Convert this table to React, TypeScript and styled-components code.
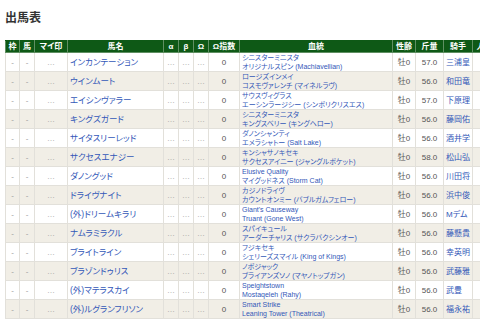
import React from 'react'
import styled, { createGlobalStyle } from 'styled-components'

const GlobalStyle = createGlobalStyle`
  html, body {
    margin: 0;
    padding: 0;
    background: #ffffff;
  }
  body {
    font-family: 'Liberation Sans', 'Noto Sans CJK JP', sans-serif;
    font-feature-settings: 'palt';
    color: #444;
  }
`

type TEntry = {
  name: string
  sire: string
  dam: string
  weight: string
  jockey: string
}

const entries: TEntry[] = [
  { name: 'インカンテーション', sire: 'シニスターミニスタ', dam: 'オリジナルスピン (Machiavellian)', weight: '57.0', jockey: '三浦皇' },
  { name: 'ウインムート', sire: 'ロージズインメイ', dam: 'コスモヴァレンチ (マイネルラヴ)', weight: '56.0', jockey: '和田竜' },
  { name: 'エイシンヴァラー', sire: 'サウスヴィグラス', dam: 'エーシンラージシー (シンボリクリスエス)', weight: '57.0', jockey: '下原理' },
  { name: 'キングズガード', sire: 'シニスターミニスタ', dam: 'キングスベリー (キングヘロー)', weight: '56.0', jockey: '藤岡佑' },
  { name: 'サイタスリーレッド', sire: 'ダノンシャンティ', dam: 'エメラシャトー (Salt Lake)', weight: '56.0', jockey: '酒井学' },
  { name: 'サクセスエナジー', sire: 'キンシャサノキセキ', dam: 'サクセスアイニー (ジャングルポケット)', weight: '58.0', jockey: '松山弘' },
  { name: 'ダノングッド', sire: 'Elusive Quality', dam: 'マイグッドネス (Storm Cat)', weight: '56.0', jockey: '川田将' },
  { name: 'ドライヴナイト', sire: 'カジノドライヴ', dam: 'カウントオンミー (バブルガムフェロー)', weight: '56.0', jockey: '浜中俊' },
  { name: '(外)ドリームキラリ', sire: "Giant's Causeway", dam: 'Truant (Gone West)', weight: '56.0', jockey: 'Mデム' },
  { name: 'ナムラミラクル', sire: 'スパイキュール', dam: 'アーダーチャリス (サクラバクシンオー)', weight: '56.0', jockey: '藤懸貴' },
  { name: 'ブライトライン', sire: 'フジキセキ', dam: 'シェリーズスマイル (King of Kings)', weight: '56.0', jockey: '幸英明' },
  { name: 'ブラゾンドゥリス', sire: 'ノボジャック', dam: 'ブライアンズソノ (マヤノトップガン)', weight: '56.0', jockey: '武藤雅' },
  { name: '(外)マテラスカイ', sire: 'Speightstown', dam: 'Mostaqeleh (Rahy)', weight: '56.0', jockey: '武豊' },
  { name: '(外)ルグランフリソン', sire: 'Smart Strike', dam: 'Leaning Tower (Theatrical)', weight: '56.0', jockey: '福永祐' },
]

const columns: { label: string; width: number }[] = [
  { label: '枠', width: 14 },
  { label: '馬', width: 15 },
  { label: 'マイ印', width: 33 },
  { label: '馬名', width: 96 },
  { label: 'α', width: 15 },
  { label: 'β', width: 15 },
  { label: 'Ω', width: 15 },
  { label: 'Ω指数', width: 31 },
  { label: '血統', width: 153 },
  { label: '性齢', width: 23 },
  { label: '斤量', width: 28 },
  { label: '騎手', width: 29 },
  { label: '人気', width: 24 },
]

const Page = styled.div`
  padding: 0 0 0 5px;
`

const Title = styled.h2`
  margin: 9px 0 15px;
  font-family: 'Noto Sans CJK JP', sans-serif;
  font-size: 12px;
  line-height: 16px;
  font-weight: bold;
  color: #333;
`

const TableWrap = styled.div`
  width: 475px;
  overflow: hidden;
`

const Table = styled.table`
  width: 491px;
  table-layout: fixed;
  border-collapse: collapse;
`

const Col = styled.col<{ $w: number }>`
  width: ${(p) => p.$w}px;
`

const HeadCell = styled.th`
  height: 11px;
  padding: 0;
  background: #0e5916;
  border: 1px solid #5f8f62;
  border-top-color: #0e5916;
  color: #ffffff;
  font-size: 8px;
  line-height: 11px;
  font-weight: bold;
  text-align: center;
  white-space: nowrap;
  overflow: hidden;
`

const Row = styled.tr<{ $alt: boolean }>`
  background: ${(p) => (p.$alt ? '#f1eee6' : '#ffffff')};
`

const Cell = styled.td<{ $align?: 'left' | 'center'; $muted?: boolean }>`
  height: 18px;
  padding: 0 0 0 ${(p) => (p.$align === 'left' ? '2px' : '0')};
  border: 1px solid #e2e0da;
  text-align: ${(p) => p.$align ?? 'center'};
  color: ${(p) => (p.$muted ? '#9a9a9a' : '#555')};
  font-size: 8px;
  line-height: 9px;
  white-space: nowrap;
  overflow: hidden;
`

const HorseName = styled.span`
  color: #3358b8;
  font-size: 8.5px;
`

const Pedigree = styled.div`
  color: #3358b8;
  font-size: 7px;
  line-height: 9px;
`

const Jockey = styled.span`
  color: #3358b8;
  font-size: 8px;
`

function EntryRow({ entry, index }: { entry: TEntry; index: number }) {
  return (
    <Row $alt={index % 2 === 1}>
      <Cell $muted>-</Cell>
      <Cell $muted>-</Cell>
      <Cell $muted>…</Cell>
      <Cell $align="left">
        <HorseName>{entry.name}</HorseName>
      </Cell>
      <Cell $muted>…</Cell>
      <Cell $muted>…</Cell>
      <Cell $muted>…</Cell>
      <Cell>0</Cell>
      <Cell $align="left">
        <Pedigree>{entry.sire}</Pedigree>
        <Pedigree>{entry.dam}</Pedigree>
      </Cell>
      <Cell>牡0</Cell>
      <Cell>{entry.weight}</Cell>
      <Cell $align="left">
        <Jockey>{entry.jockey}</Jockey>
      </Cell>
      <Cell />
    </Row>
  )
}

export default function App() {
  return (
    <>
      <GlobalStyle />
      <Page>
        <Title>出馬表</Title>
        <TableWrap>
          <Table>
            <colgroup>
              {columns.map((c) => (
                <Col key={c.label} $w={c.width} />
              ))}
            </colgroup>
            <thead>
              <tr>
                {columns.map((c) => (
                  <HeadCell key={c.label}>{c.label}</HeadCell>
                ))}
              </tr>
            </thead>
            <tbody>
              {entries.map((e, i) => (
                <EntryRow key={e.name} entry={e} index={i} />
              ))}
            </tbody>
          </Table>
        </TableWrap>
      </Page>
    </>
  )
}
